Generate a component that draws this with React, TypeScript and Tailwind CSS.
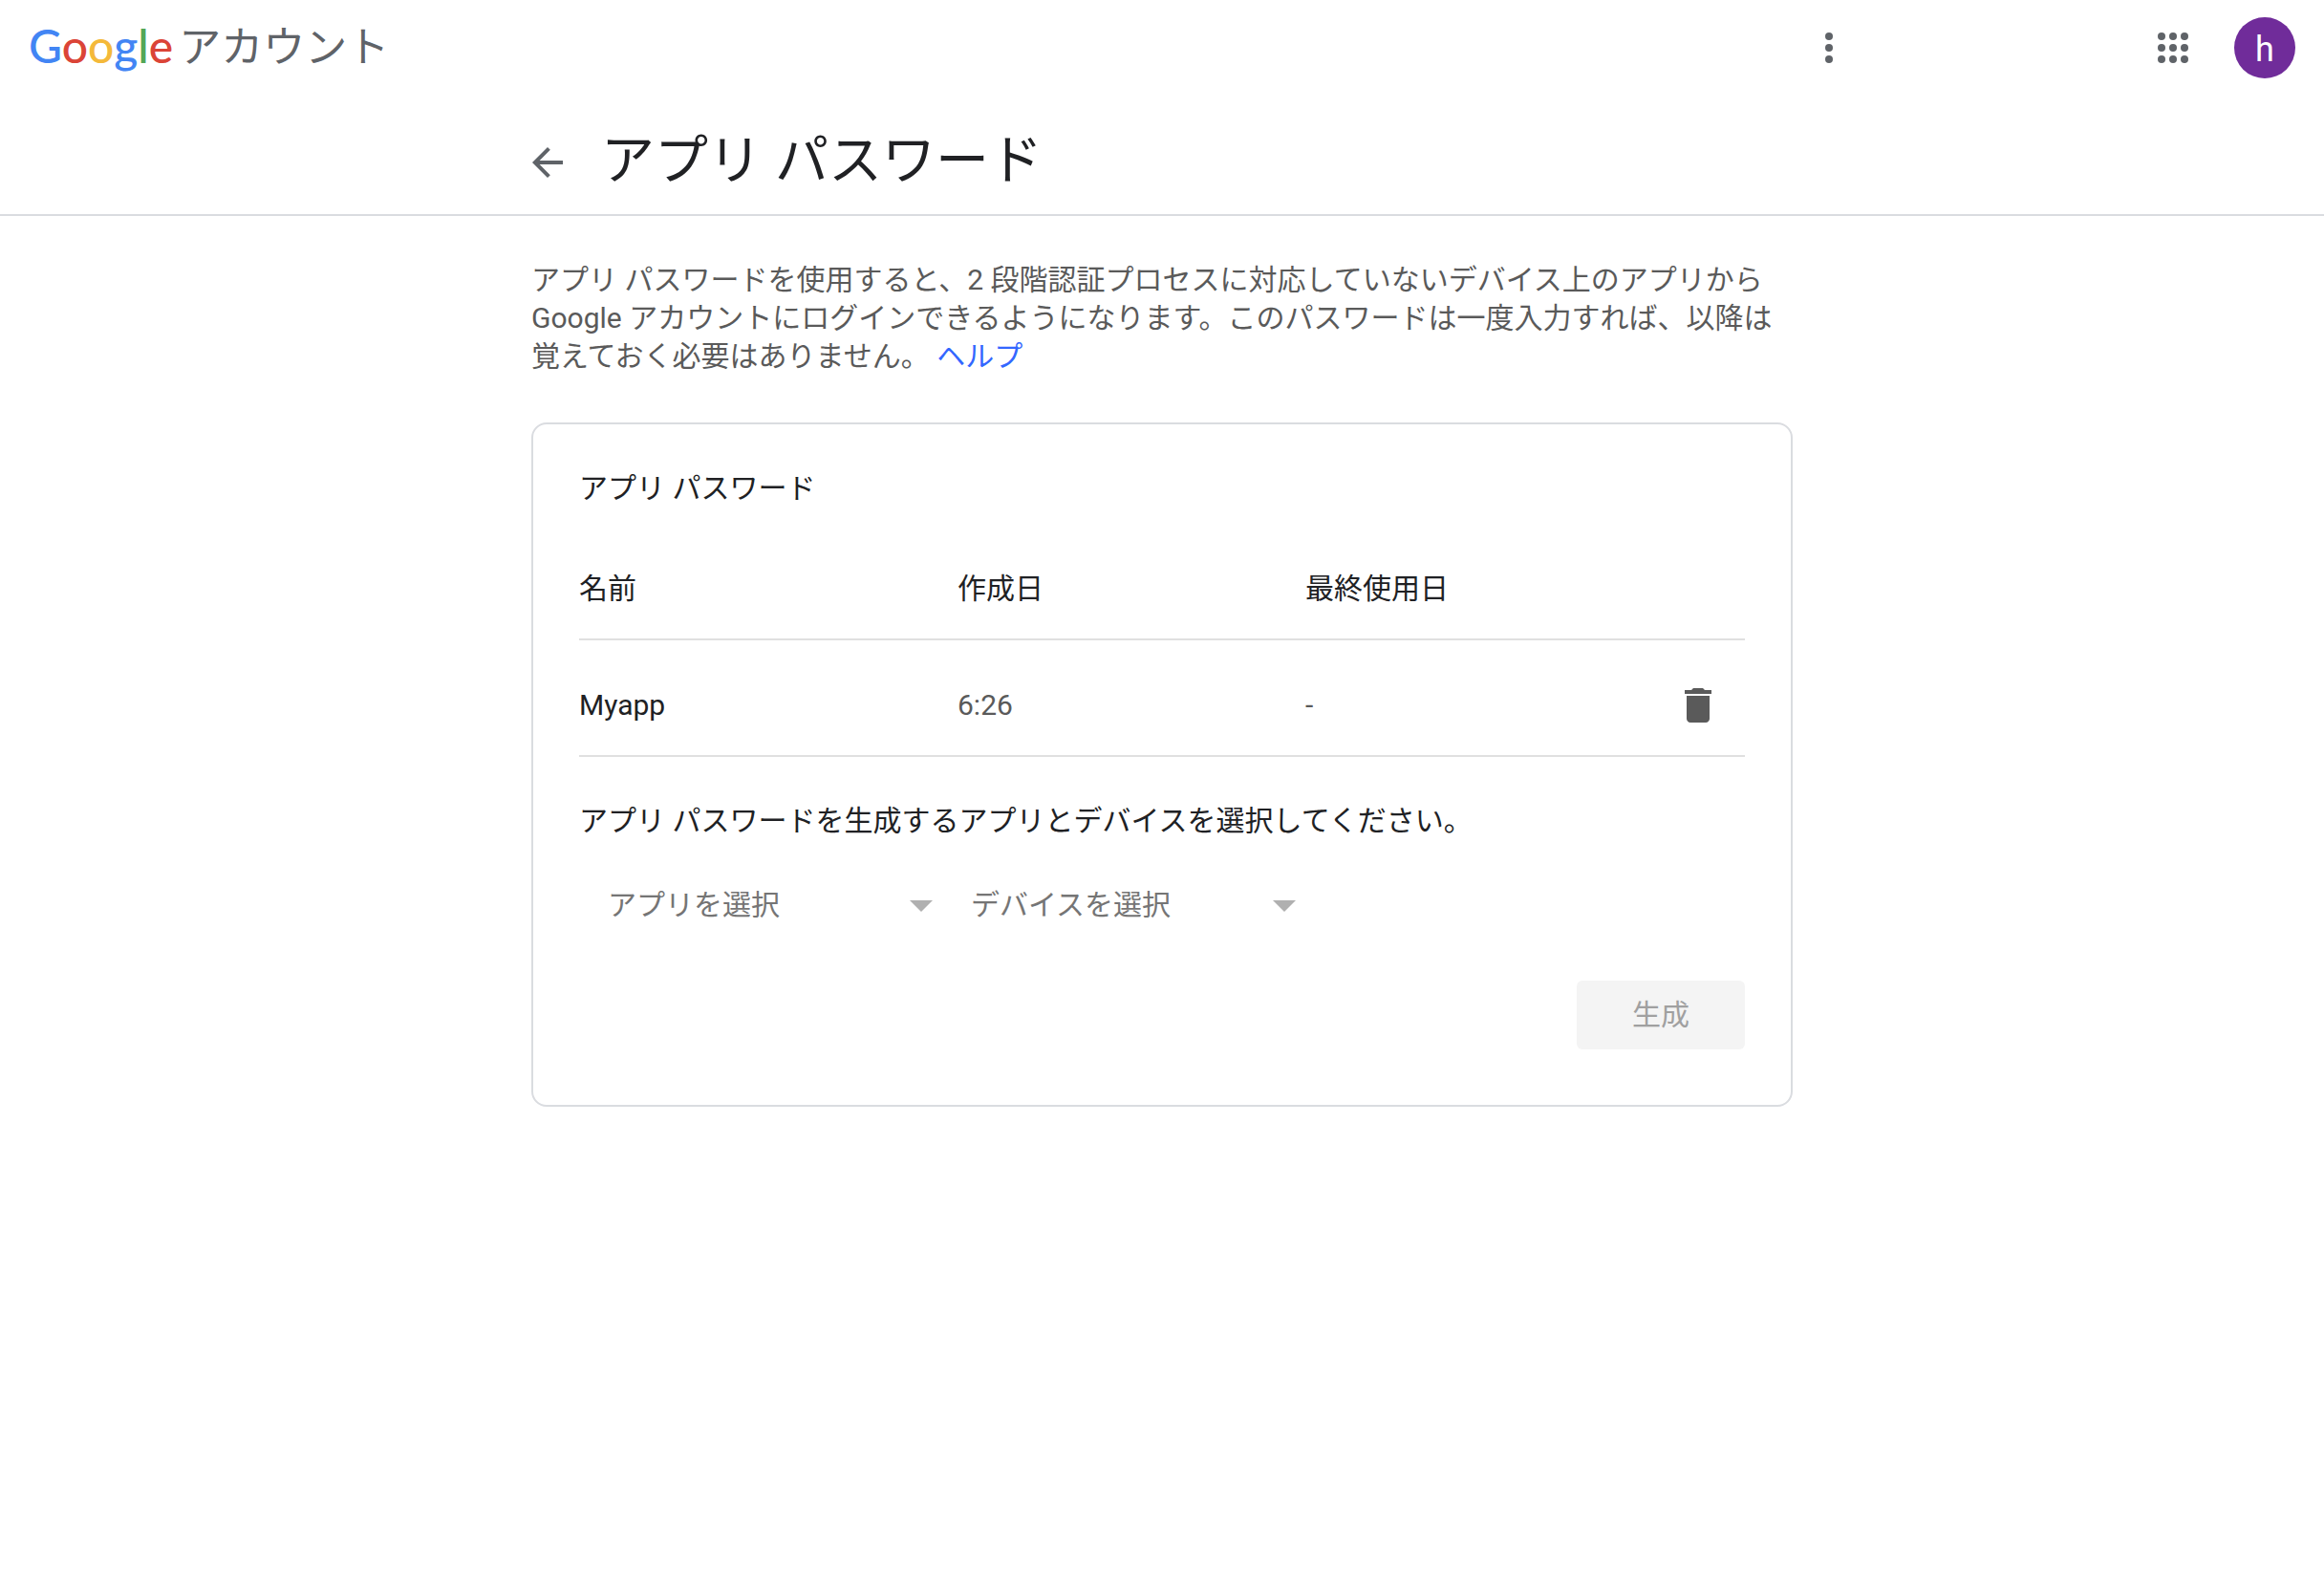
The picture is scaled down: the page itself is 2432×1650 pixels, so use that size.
import React from 'react';

interface AppPassword {
  name: string;
  created: string;
  lastUsed: string;
}

interface PickerProps {
  id: string;
  label: string;
}

const passwords: AppPassword[] = [{ name: 'Myapp', created: '6:26', lastUsed: '-' }];

const dots = [6, 12, 18];

const Header: React.FC = () => (
  <header className="flex h-[100px] items-center justify-between pr-[30px] pl-[30px]">
    <a href="#" className="flex items-center gap-1.5 leading-[64px]">
      {/* Wordmark */}
      <span className="pb-1 font-['Lato'] text-[48px] font-medium text-[#4285f4]">
        G<span className="text-[#db4437]">o</span>
        <span className="text-[#f4b93a]">o</span>g<span className="text-[#53a657]">l</span>
        <span className="text-[#db4437]">e</span>
      </span>
      <span className="text-[44px] text-[#5f6368]">アカウント</span>
    </a>

    <div className="flex items-center">
      <button aria-label="その他" className="mr-[312px] text-[#5f6368]">
        <svg viewBox="0 0 24 24" className="size-12" fill="currentColor">
          {dots.map((y) => (
            <circle key={y} cx="12" cy={y} r="2" />
          ))}
        </svg>
      </button>
      <button aria-label="Google アプリ" className="mr-10 text-[#5f6368]">
        <svg viewBox="0 0 24 24" className="size-12" fill="currentColor">
          {dots.map((y) => dots.map((x) => <circle key={`${x}-${y}`} cx={x} cy={y} r="2" />))}
        </svg>
      </button>
      <button className="size-16 rounded-full bg-[#702c9a] pt-1 text-4xl leading-[60px] text-white">h</button>
    </div>
  </header>
);

const Picker: React.FC<PickerProps> = ({ id, label }) => (
  <div className="relative w-[380px]">
    <select
      id={id}
      aria-label={label}
      className="h-[72px] w-full appearance-none bg-transparent pl-[30px] text-[#757575]"
    >
      <option>{label}</option>
    </select>
    <svg
      viewBox="0 0 24 12"
      className="pointer-events-none absolute top-[31px] right-2.5 h-3 w-6 text-[#b0b0b0]"
      fill="currentColor"
    >
      <path d="M0 0h24L12 12z" />
    </svg>
  </div>
);

const App: React.FC = () => {
  return (
    <div
      lang="ja"
      className="min-h-screen bg-white font-[Roboto,'Noto_Sans_CJK_JP',sans-serif] text-[30px] leading-[40px] text-[#202124]"
    >
      <Header />

      {/* Page title */}
      <div className="border-b-2 border-[#dadce0]">
        <div className="mx-auto flex h-[124px] max-w-[1320px] items-center gap-8 pt-4">
          <button aria-label="戻る" className="-ml-[7px] text-[#5f6368]">
            <svg viewBox="0 0 24 24" className="size-12" fill="currentColor">
              <path d="M20 11H7.83l5.59-5.59L12 4l-8 8 8 8 1.41-1.41L7.83 13H20v-2z" />
            </svg>
          </button>
          <h1 className="pb-1 text-[56px] leading-[72px]">アプリ パスワード</h1>
        </div>
      </div>

      <main className="mx-auto max-w-[1320px] pt-[47px]">
        <p className="text-[#5a5a5a]">
          アプリ パスワードを使用すると、2 段階認証プロセスに対応していないデバイス上のアプリから Google
          アカウントにログインできるようになります。このパスワードは一度入力すれば、以降は覚えておく必要はありません。{' '}
          <a href="#" className="text-[#3367ff]">ヘルプ</a>
        </p>

        <section className="mt-[49px] rounded-2xl border-2 border-[#dadce0] px-12 pt-[47px] pb-[58px]">
          <h2>アプリ パスワード</h2>

          <table className="mt-[65px] w-full table-fixed border-collapse text-left">
            <thead>
              <tr className="border-b-2 border-[#e0e0e0]">
                <th className="w-[396px] pb-8 font-normal">名前</th>
                <th className="w-[364px] pb-8 font-normal">作成日</th>
                <th className="pb-8 font-normal">最終使用日</th>
                <th className="w-[98px]" />
              </tr>
            </thead>
            <tbody>
              {passwords.map((item) => (
                <tr key={item.name} className="border-b-2 border-[#e0e0e0] text-[#5a5a5a]">
                  <td className="pt-11 pb-7 text-[#202124]">{item.name}</td>
                  <td className="pt-11 pb-7">{item.created}</td>
                  <td className="pt-11 pb-7">{item.lastUsed}</td>
                  <td className="pt-11 pb-7">
                    <button aria-label="削除" className="ml-auto mr-[25px] block">
                      <svg viewBox="0 0 24 24" className="size-12" fill="currentColor">
                        <path d="M6 19c0 1.1.9 2 2 2h8c1.1 0 2-.9 2-2V7H6v12zM19 4h-3.5l-1-1h-5l-1 1H5v2h14V4z" />
                      </svg>
                    </button>
                  </td>
                </tr>
              ))}
            </tbody>
          </table>

          <p className="mt-[47px]">アプリ パスワードを生成するアプリとデバイスを選択してください。</p>

          <div className="mt-8 flex">
            <Picker id="app" label="アプリを選択" />
            <Picker id="device" label="デバイスを選択" />
          </div>

          <div className="mt-[43px] flex justify-end">
            <button disabled className="h-[72px] w-44 rounded-md bg-[#f4f4f4] text-[#a0a0a0]">
              生成
            </button>
          </div>
        </section>
      </main>
    </div>
  );
};

export default App;
